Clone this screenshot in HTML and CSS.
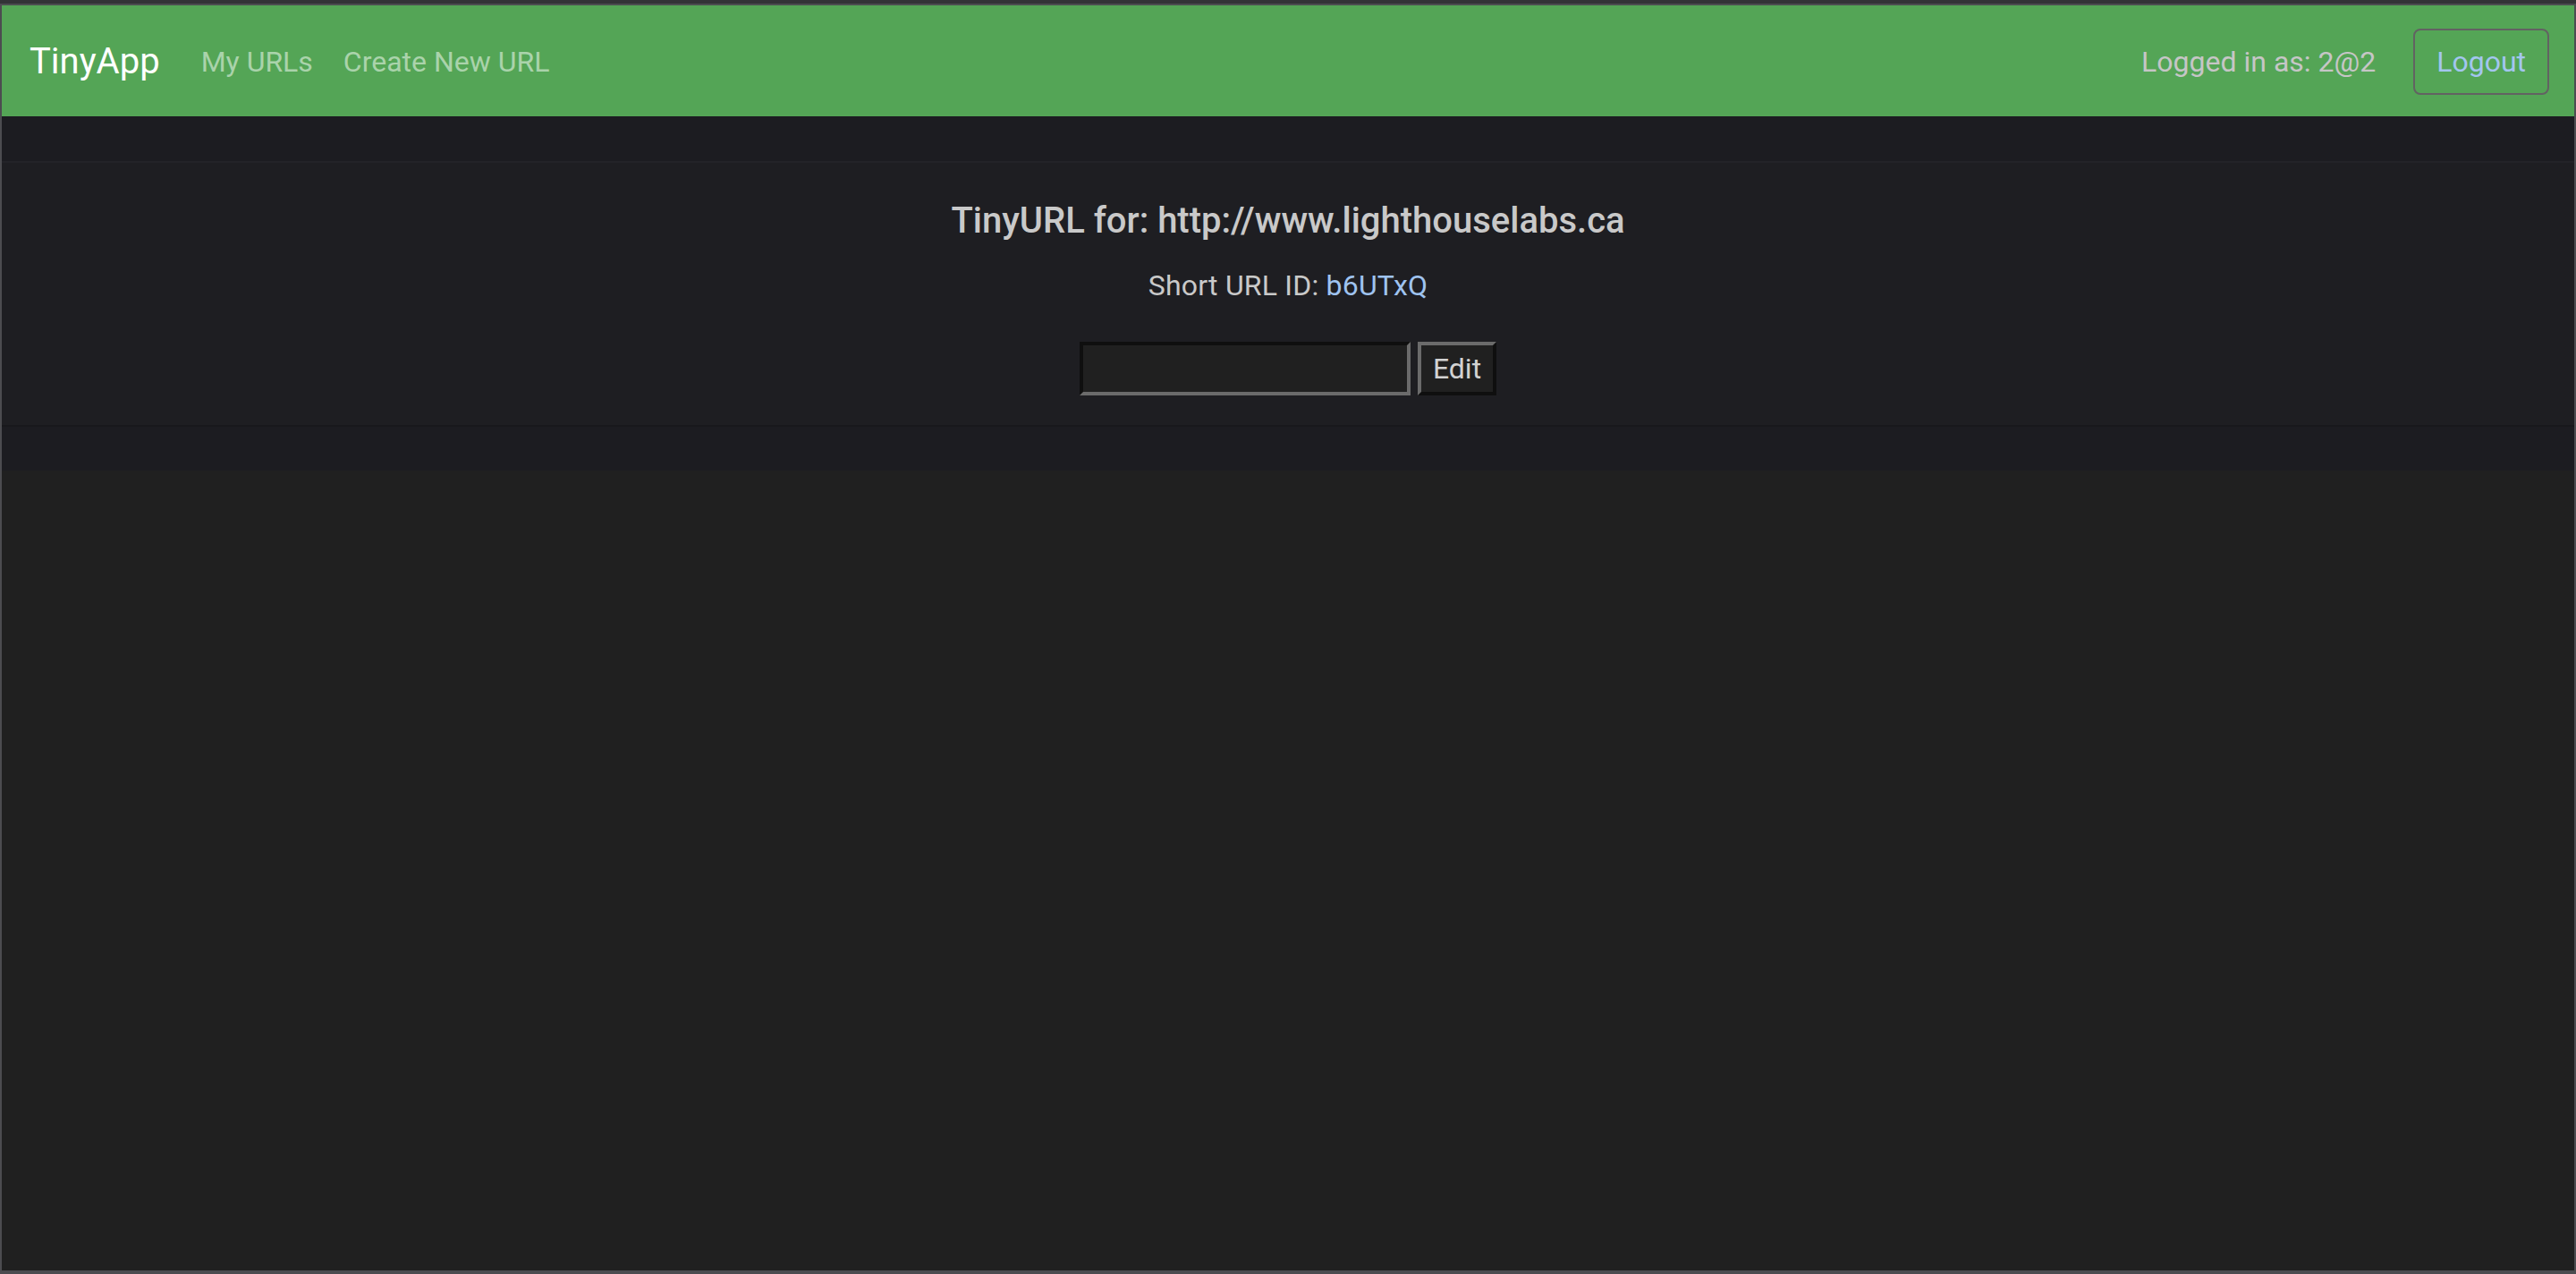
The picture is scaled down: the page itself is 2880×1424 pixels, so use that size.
FILE: index.html
```html
<!DOCTYPE html>
<html lang="en">
<head>
<meta charset="utf-8">
<title>TinyApp</title>
<link rel="stylesheet" href="styles.css">
</head>
<body>
<div class="window">
  <div class="frame">
    <nav class="navbar">
      <a class="brand" href="#">TinyApp</a>
      <a class="nav-link" href="#">My URLs</a>
      <a class="nav-link" href="#">Create New URL</a>
      <div class="nav-right">
        <span class="user">Logged in as: 2@2</span>
        <button class="logout" type="button">Logout</button>
      </div>
    </nav>
    <div class="band"></div>
    <main class="card">
      <h5 class="title">TinyURL for: http://www.lighthouselabs.ca</h5>
      <p class="short">Short URL ID: <a href="#">b6UTxQ</a></p>
      <form class="edit-form">
        <input class="url-input" type="text">
        <button class="edit-btn" type="button">Edit</button>
      </form>
    </main>
    <div class="band band-bottom"></div>
  </div>
</div>
</body>
</html>
```

FILE: styles.css
```css
html, body {
  margin: 0;
  padding: 0;
  background: #202020;
}
body {
  height: 1424px;
  overflow: hidden;
  font-family: Roboto, "Liberation Sans", sans-serif;
}
.window {
  height: 1424px;
  box-sizing: border-box;
  border-top: 4px solid #333337;
}
.frame {
  height: 1420px;
  box-sizing: border-box;
  border: 2px solid #4c4c50;
  border-bottom-width: 4px;
  background: #202020;
}
.navbar {
  height: 124px;
  box-sizing: border-box;
  background: #54a556;
  display: flex;
  align-items: center;
  padding: 2px 28px 0 31px;
}
.brand {
  font-size: 40px;
  color: #ffffff;
  text-decoration: none;
  margin-right: 30px;
  line-height: 60px;
}
.nav-link {
  font-size: 32px;
  color: #aad3ab;
  text-decoration: none;
  padding: 0 16px;
  line-height: 48px;
}
.nav-link + .nav-link {
  padding-left: 18px;
}
.nav-right {
  margin-left: auto;
  display: flex;
  align-items: center;
  gap: 42px;
}
.user {
  font-size: 32px;
  color: #c6c6c6;
  line-height: 48px;
}
.logout {
  font-family: inherit;
  font-size: 32px;
  color: #a3c6ef;
  background: transparent;
  border: 2px solid #626262;
  border-radius: 8px;
  height: 74px;
  padding: 0 24px;
  line-height: 48px;
}
.band {
  height: 50px;
  background: #1c1c21;
}
.band-bottom {
  height: 49px;
}
.card {
  height: 297px;
  box-sizing: border-box;
  background: #1e1e22;
  border-top: 2px solid #232328;
  border-bottom: 2px solid #18181c;
  padding-top: 41px;
  text-align: center;
}
.title {
  margin: 0;
  font-size: 40px;
  font-weight: 500;
  line-height: 48px;
  color: #c9c9c9;
}
.short {
  margin: 24px 0 0;
  font-size: 32px;
  line-height: 48px;
  color: #c9c9c9;
  letter-spacing: 0.2px;
}
.short a {
  color: #9fc3f0;
  text-decoration: none;
}
.edit-form {
  margin-top: 39px;
  display: flex;
  justify-content: center;
  gap: 8px;
}
.url-input {
  width: 370px;
  height: 60px;
  box-sizing: border-box;
  background: #202020;
  border: 4px solid;
  border-color: #0f0f0f #6b6b6b #6b6b6b #0f0f0f;
  margin: 0;
  padding: 0 4px;
  color: #ddd;
  font-size: 32px;
}
.edit-btn {
  width: 88px;
  height: 60px;
  box-sizing: border-box;
  background: #202020;
  border: 4px solid;
  border-color: #6b6b6b #0f0f0f #0f0f0f #6b6b6b;
  margin: 0;
  padding: 0;
  color: #d2d2d2;
  font-family: inherit;
  font-size: 32px;
}
```
